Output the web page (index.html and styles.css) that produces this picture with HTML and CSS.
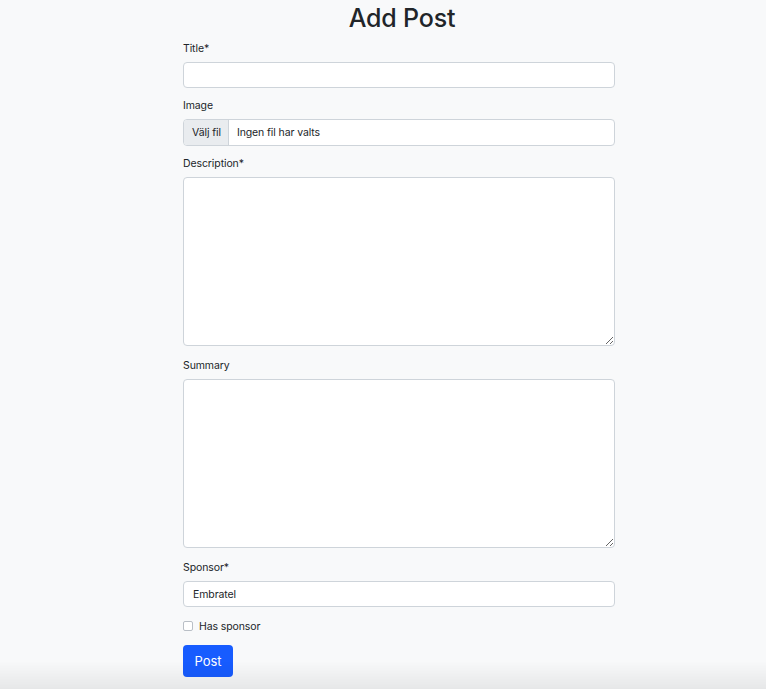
FILE: index.html
```html
<!DOCTYPE html>
<html lang="sv">
<head>
<meta charset="utf-8">
<title>Add Post</title>
<link rel="stylesheet" href="styles.css">
</head>
<body>
<div class="page">
  <form class="form">
    <h1 class="heading">Add Post</h1>
    <div class="group">
      <label class="label">Title*</label>
      <input class="control" type="text">
    </div>
    <div class="group">
      <label class="label">Image</label>
      <div class="file">
        <span class="file-btn">Välj fil</span>
        <span class="file-name">Ingen fil har valts</span>
      </div>
    </div>
    <div class="group group-area">
      <label class="label">Description*</label>
      <textarea class="control area"></textarea>
    </div>
    <div class="group group-area">
      <label class="label">Summary</label>
      <textarea class="control area"></textarea>
    </div>
    <div class="group">
      <label class="label">Sponsor*</label>
      <input class="control" type="text" value="Embratel">
    </div>
    <div class="check">
      <span class="box"></span>
      <span class="check-label">Has sponsor</span>
    </div>
    <button class="btn" type="button">Post</button>
  </form>
</div>
<div class="fade"></div>
</body>
</html>
```
FILE: styles.css
```css
html, body {
  margin: 0;
  padding: 0;
  background: #f8f9fa;
  color: #212529;
  font-family: Inter, "Noto Sans", sans-serif;
}
.page {
  display: flex;
  justify-content: center;
  padding-left: 32px;
}
.form {
  width: 432px;
  display: flex;
  flex-direction: column;
}
.heading {
  margin: 0 0 7px 0;
  padding: 3px 0 0 6px;
  font-size: 25px;
  line-height: 31px;
  font-weight: 500;
  text-align: center;
  letter-spacing: -0.2px;
}
.group {
  display: flex;
  flex-direction: column;
  margin-bottom: 10px;
}
.group-area {
  margin-bottom: 12px;
}
.label {
  font-size: 10.5px;
  line-height: 16px;
  margin-bottom: 5px;
  letter-spacing: -0.1px;
}
.control {
  box-sizing: border-box;
  height: 26px;
  width: 100%;
  margin: 0;
  border: 1px solid #ced4da;
  border-radius: 4px;
  background: #fff;
  padding: 0 9px;
  font-family: inherit;
  font-size: 10.5px;
  letter-spacing: -0.1px;
  color: #212529;
  outline: none;
}
.area {
  display: block;
  height: 169px;
  resize: vertical;
  padding: 4px 9px;
}
.file {
  box-sizing: border-box;
  display: flex;
  height: 27px;
  border: 1px solid #ced4da;
  border-radius: 4px;
  background: #fff;
  overflow: hidden;
  font-size: 10.5px;
  letter-spacing: -0.1px;
  align-items: stretch;
}
.file-btn {
  display: flex;
  align-items: center;
  padding: 0 7px 0 8px;
  background: #e9ecef;
  border-right: 1px solid #ced4da;
}
.file-name {
  display: flex;
  align-items: center;
  padding-left: 8px;
}
.check {
  display: flex;
  align-items: center;
  gap: 6px;
  margin-top: 1px;
  height: 16px;
  margin-bottom: 11px;
}
.box {
  box-sizing: border-box;
  width: 10px;
  height: 10px;
  border: 1px solid #b9bfc6;
  border-radius: 2px;
  background: #fff;
}
.check-label {
  font-size: 10.5px;
  letter-spacing: -0.1px;
}
.btn {
  align-self: flex-start;
  height: 32px;
  width: 50px;
  padding: 0;
  border: none;
  border-radius: 4px;
  background: #175cff;
  color: #fff;
  font-family: inherit;
  font-size: 13px;
}
.fade {
  position: fixed;
  left: 0;
  right: 0;
  bottom: 0;
  height: 28px;
  background: linear-gradient(to bottom, rgba(0,0,0,0), rgba(0,0,0,0.07));
  pointer-events: none;
}
```
